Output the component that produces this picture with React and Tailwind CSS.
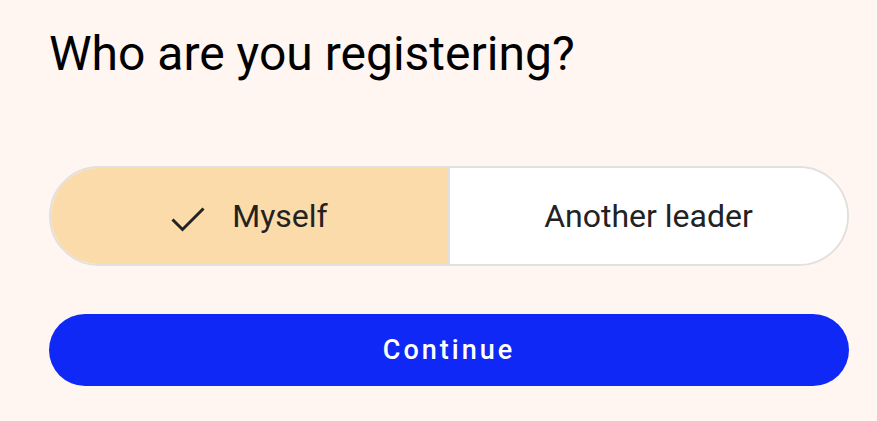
import React, { useState } from 'react';

const CheckIcon = () => (
  <svg viewBox="0 0 34 26" className="w-[34px] h-[26px] mt-[6px]" fill="none" stroke="#222" strokeWidth="3">
    <path d="M1.5 13.5l10 10L32.5 2.5" />
  </svg>
);

const App = () => {
  const [who, setWho] = useState('myself');

  return (
    <main className="min-h-screen w-full bg-[#fff6f1] pl-[49px] pt-[26px] font-['Roboto',sans-serif]">
      <div className="w-[800px]">
        <h1 className="text-[48px] leading-[56px] text-black">Who are you registering?</h1>

        <div className="mt-[84px] flex h-[100px] rounded-full border-2 border-[#e2e0de] overflow-hidden">
          <button
            onClick={() => setWho('myself')}
            className={`flex-1 flex items-center justify-center gap-[27px] text-[32px] text-[#222] border-r-2 border-[#e2e0de] ${who === 'myself' ? 'bg-[#fbdba9]' : 'bg-white'}`}
          >
            {who === 'myself' && <CheckIcon />}
            Myself
          </button>
          <button
            onClick={() => setWho('other')}
            className={`flex-1 flex items-center justify-center gap-[27px] text-[32px] text-[#222] ${who === 'other' ? 'bg-[#fbdba9]' : 'bg-white'}`}
          >
            {who === 'other' && <CheckIcon />}
            Another leader
          </button>
        </div>

        <button className="mt-[48px] w-full h-[72px] rounded-full bg-[#0f28f5] text-white text-[27px] font-medium tracking-[3px]">
          Continue
        </button>
      </div>
    </main>
  );
};

export default App;
